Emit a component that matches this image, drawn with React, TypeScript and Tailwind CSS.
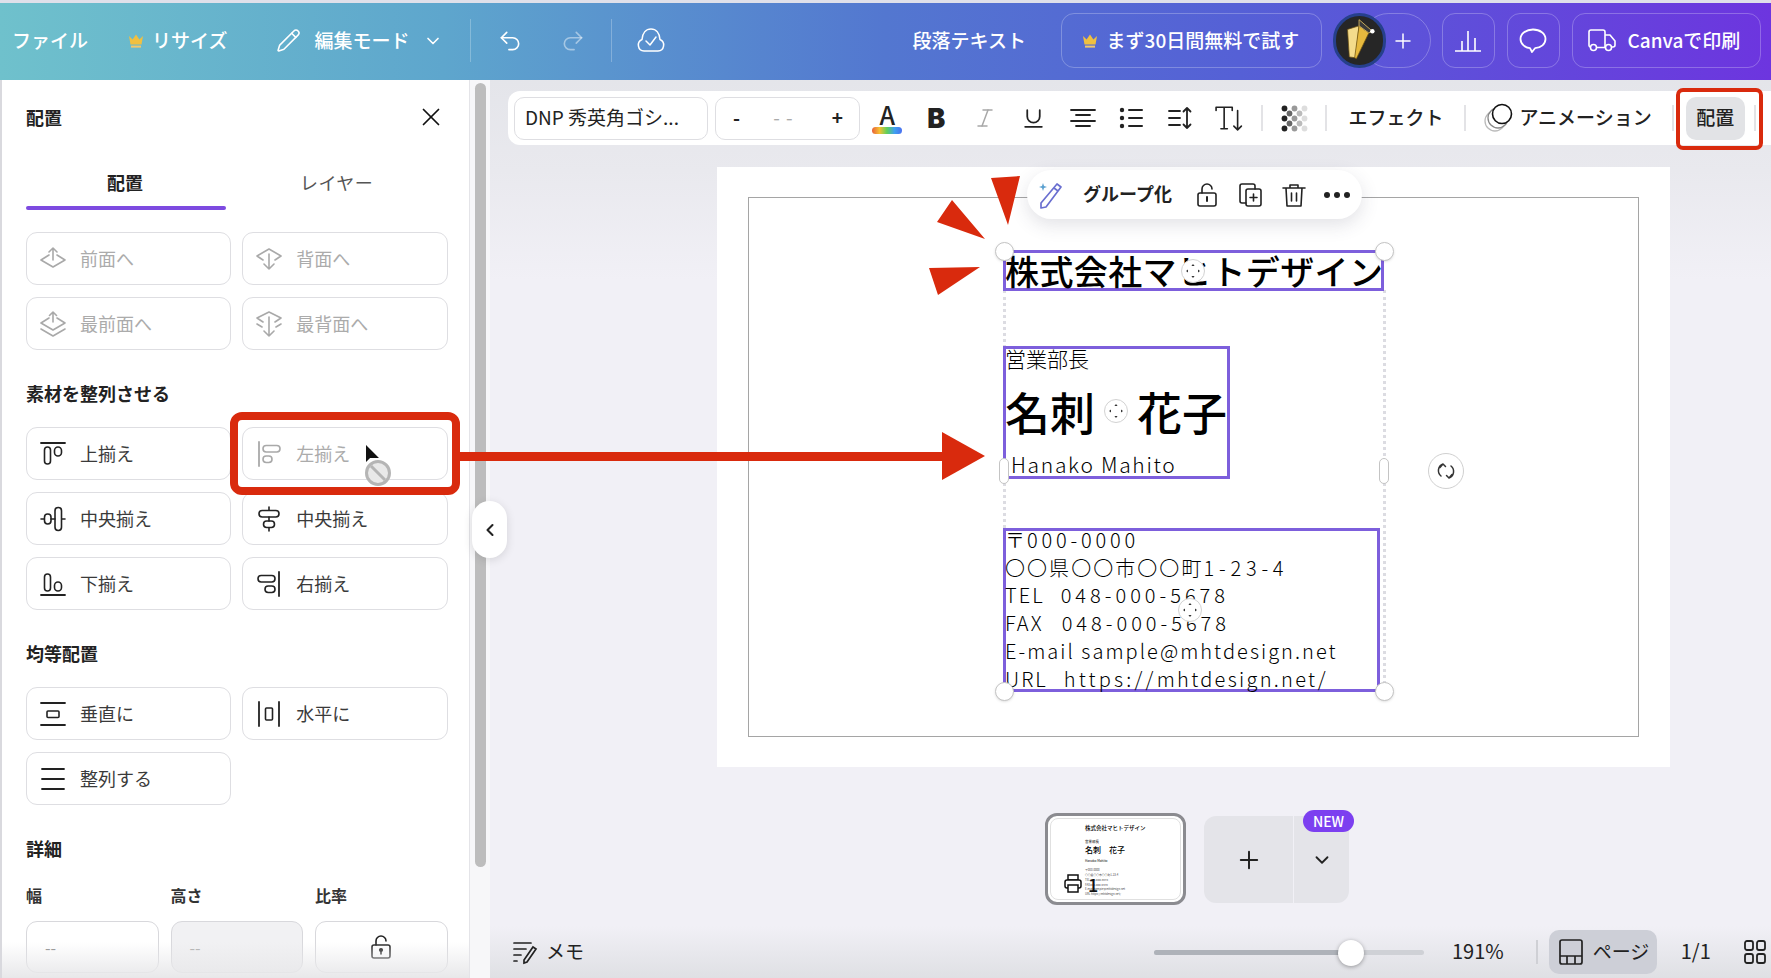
import React from "react";
import { X, ChevronDown, ChevronLeft, Plus, Undo2, Redo2, Pencil, Italic, Underline } from "lucide-react";

type IP = { children: React.ReactNode; className?: string; size?: number; sw?: number };
const I = ({ children, className = "", size = 26, sw = 1.6 }: IP) => (
  <svg viewBox="0 0 26 26" width={size} height={size} fill="none" stroke="currentColor" strokeWidth={sw} strokeLinecap="round" strokeLinejoin="round" className={"shrink-0 " + className}>
    {children}
  </svg>
);

const Crown = ({ className = "" }: { className?: string }) => (
  <svg viewBox="0 0 16 16" width={16} height={16} className={"shrink-0 " + className}>
    <path d="M1 3l3.6 3.4L8 1.5l3.4 4.9L15 3l-1.5 8.5h-11z" fill="#f0c040" />
    <rect x="3" y="12.6" width="10" height="2" fill="#f2c96a" />
  </svg>
);

const icons: Record<string, React.ReactNode> = {
  forward: <><path d="M13 2v12M9 6l4-4 4 4" /><path d="M9 9l-8 5 12 7 12-7-8-5" /></>,
  backward: <><path d="M7 14l-6-4 12-7 12 7-6 4" /><path d="M13 8v15M8 18l5 5 5-5" /></>,
  front: <><path d="M13 1v10M9.500 4.500L13 1l3.500 3.500" /><path d="M9 7l-8 5 12 7 12-7-8-5" /><path d="M1 18l12 7 12-7" /></>,
  back: <><path d="M7 11L1 7l12-6 12 6-6 4" /><path d="M1 13l5 3M25 13l-5 3" /><path d="M13 6v19M8 20l5 5 5-5" /></>,
  top: <><path d="M1 2h24" strokeWidth="1.800" /><rect x="4.500" y="6" width="6" height="17" rx="3" /><rect x="14.500" y="6" width="7" height="9" rx="3.500" /></>,
  left: <><path d="M3 1v24" strokeWidth="1.800" /><rect x="7" y="4.500" width="17" height="6.500" rx="3.200" /><rect x="7" y="15" width="9" height="6.500" rx="3.200" /></>,
  midv: <><path d="M1 13h3M11 13h4M22 13h3" /><rect x="4.500" y="8" width="6.500" height="10" rx="3.200" /><rect x="15" y="1.500" width="6.500" height="23" rx="3.200" /></>,
  midh: <><path d="M13 1v3M13 11v4M13 22v3" /><rect x="3" y="4.500" width="20" height="6.500" rx="3.200" /><rect x="7.500" y="15" width="11" height="6.500" rx="3.200" /></>,
  bottom: <><path d="M1 24h24" strokeWidth="1.800" /><rect x="4.500" y="3" width="6" height="17" rx="3" /><rect x="14.500" y="11" width="7" height="9" rx="3.500" /></>,
  right: <><path d="M23 1v24" strokeWidth="1.800" /><rect x="2" y="4.500" width="17" height="6.500" rx="3.200" /><rect x="9" y="15" width="10" height="6.500" rx="3.200" /></>,
  dv: <><path d="M1 2h24M1 24h24" strokeWidth="1.800" /><rect x="7" y="10" width="12" height="6.500" rx="1" /></>,
  dh: <><path d="M3 1v24M23 1v24" strokeWidth="1.800" /><rect x="9.500" y="7" width="7" height="12" rx="1" /></>,
  tidy: <><path d="M2 3h22M2 13h22M2 23h22" strokeWidth="1.800" /></>,
};

const Btn = ({ icon, label, off }: { icon: string; label: string; off?: boolean }) => (
  <div className={"h-[53px] border border-[#dedee2] rounded-[11px] flex items-center pl-[13px] gap-[14px] text-[18px] bg-white " + (off ? "text-[#ababab]" : "text-[#3a3a3a]")}>
    <I className={off ? "text-[#a9a9a9]" : "text-[#222]"}>{icons[icon]}</I>
    <span>{label}</span>
  </div>
);

const Heading = ({ children, className = "" }: { children: React.ReactNode; className?: string }) => (
  <div className={"h-6 mt-[33px] mb-5 leading-[21px] text-[18px] font-semibold text-[#222] " + className}>{children}</div>
);

const Panel = () => (
  <aside className="relative w-[470px] shrink-0 bg-white border-l-2 border-r border-l-[#d9d9de] border-r-[#e4e4e8] pl-6 pr-[21px]">
    <div className="h-[76px] flex items-center justify-between pb-[2px]">
      <span className="text-[18px] font-semibold text-[#222]">配置</span>
      <X size={30} strokeWidth={1.400} className="text-[#111] mr-[2px]" />
    </div>
    <div className="grid grid-cols-2 w-[421.500px] h-[54px] text-[18px]">
      <div className="relative flex items-center justify-center w-[200px] text-[#222] font-semibold pb-[2px] pr-[2px]">
        配置
        <div className="absolute left-0 right-0 bottom-0 h-1 rounded bg-[#7d4ae0]" />
      </div>
      <div className="flex items-center justify-center -ml-[11px] text-[#555] pb-[2px] tracking-[0.500px]">レイヤー</div>
    </div>
    <div className="grid grid-cols-2 gap-x-[11px] gap-y-3 w-[421.500px] mt-[22px]">
      <Btn icon="forward" label="前面へ" off />
      <Btn icon="backward" label="背面へ" off />
      <Btn icon="front" label="最前面へ" off />
      <Btn icon="back" label="最背面へ" off />
    </div>
    <Heading>素材を整列させる</Heading>
    <div className="grid grid-cols-2 gap-x-[11px] gap-y-3 w-[421.500px]">
      <Btn icon="top" label="上揃え" />
      <Btn icon="left" label="左揃え" off />
      <Btn icon="midv" label="中央揃え" />
      <Btn icon="midh" label="中央揃え" />
      <Btn icon="bottom" label="下揃え" />
      <Btn icon="right" label="右揃え" />
    </div>
    <Heading>均等配置</Heading>
    <div className="grid grid-cols-2 gap-x-[11px] gap-y-3 w-[421.500px]">
      <Btn icon="dv" label="垂直に" />
      <Btn icon="dh" label="水平に" />
      <Btn icon="tidy" label="整列する" />
    </div>
    <Heading className="mb-0">詳細</Heading>
    <div className="grid grid-cols-3 gap-x-3 w-[421.500px] mt-[22px] text-[16px] font-semibold text-[#333] leading-[22px]">
      <span>幅</span><span>高さ</span><span>比率</span>
    </div>
    <div className="grid grid-cols-3 gap-x-3 w-[421.500px] mt-[15px]">
      <div className="h-[52px] border border-[#d8d8dc] rounded-[11px] flex items-center pl-[18px] text-[#888] text-[16px]">--</div>
      <div className="h-[52px] border border-[#d8d8dc] rounded-[11px] flex items-center pl-[18px] text-[#aaa] text-[16px] bg-[#f1f1f3]">--</div>
      <div className="h-[52px] border border-[#d8d8dc] rounded-[11px] flex items-center justify-center text-[#222]">
        <I><path d="M8 11V7a5 5 0 0 1 10 0" /><rect x="4" y="11" width="18" height="13" rx="2" /><circle cx="13" cy="16" r="1.300" fill="currentColor" /><path d="M13 17v3" /></I>
      </div>
    </div>
    <div className="absolute left-0 right-0 bottom-0 h-[36px] bg-gradient-to-b from-[#ffffff00] to-[#e8e8ea] pointer-events-none" />
  </aside>
);

const Gutter = () => (
  <div className="w-[20px] shrink-0 bg-[#f7f7f9] pl-[5px] pt-[3px]">
    <div className="w-[11px] h-[784px] rounded-full bg-[#bdbdbd]" />
  </div>
);

const Sep = ({ className = "" }: { className?: string }) => <div className={"w-[2px] h-[26px] bg-[#e3e3e6] shrink-0 " + className} />;

const Cell = ({ children }: { children: React.ReactNode }) => <div className="w-[48.800px] shrink-0 flex items-center justify-center text-[#222]">{children}</div>;

const dots: { c: number; r: number; f: string }[] = [
  [0, 0, "#222"], [0, 2, "#222"], [0, 4, "#222"],
  [1, 1, "#666"], [1, 3, "#666"],
  [2, 0, "#999"], [2, 2, "#999"], [2, 4, "#999"],
  [3, 1, "#bbb"], [3, 3, "#bbb"],
  [4, 0, "#ddd"], [4, 2, "#ddd"], [4, 4, "#ddd"],
].map(([c, r, f]) => ({ c: c as number, r: r as number, f: f as string }));

const Toolbar = () => (
  <div className="ml-[18px] mt-[11px] h-[54px] bg-white rounded-l-[12px] flex items-center pl-[6px] text-[#222] shrink-0">
    <div className="w-[194px] h-[43px] border border-[#dedee2] rounded-[10px] flex items-center pl-[10px] pb-[2px] text-[19px] shrink-0 whitespace-nowrap">DNP 秀英角ゴシ...</div>
    <div className="w-[145px] h-[43px] ml-[7px] border border-[#dedee2] rounded-[10px] flex items-center justify-between pl-[17px] pr-[16px] pb-[2px] text-[19px] shrink-0">
      <span className="font-semibold">-</span>
      <span className="text-[#aaa] tracking-[6px]">--</span>
      <span className="font-semibold">+</span>
    </div>
    <div className="ml-[3px] flex">
      <Cell>
        <div className="flex flex-col items-center">
          <span className="text-[25px] leading-[24px] font-medium">A</span>
          <div className="w-[30px] h-[7px] rounded-full mt-[1px] bg-[linear-gradient(90deg,#e8603a,#f5c033,#5fd05a,#3fa0f0,#4a70f0)]" />
        </div>
      </Cell>
      <Cell><span className="font-['Inter',sans-serif] font-black text-[27px] leading-none">B</span></Cell>
      <Cell><Italic size={24} strokeWidth={1.500} className="text-[#a8a8a8]" /></Cell>
      <Cell><Underline size={25} strokeWidth={1.700} /></Cell>
      <Cell><I sw={1.800}><path d="M1 5h24M6 10h14M1 16h24M6 21h14" /></I></Cell>
      <Cell><I sw={2}><circle cx="4" cy="5" r="2.200" fill="currentColor" stroke="none" /><circle cx="4" cy="13" r="2.200" fill="currentColor" stroke="none" /><circle cx="4" cy="21" r="2.200" fill="currentColor" stroke="none" /><path d="M11 5h13M11 13h13M11 21h13" /></I></Cell>
      <Cell><I sw={1.800}><path d="M2 6h11M2 13h11M2 20h11" /><path d="M20 3v20M16.500 6.500L20 3l3.500 3.500M16.500 19.500L20 23l3.500-3.500" /></I></Cell>
      <Cell><I size={28} sw={1.500}><path d="M1 6V3h15v3M8.500 3v20M5.500 23h6" /><path d="M21 6v18M17.500 20.500l3.500 3.500 3.500-3.500" /></I></Cell>
    </div>
    <Sep className="ml-[8px]" />
    <div className="w-[62px] flex justify-center shrink-0">
      <svg width="27" height="27" viewBox="0 0 27 27" className="shrink-0">
        {dots.map((d, i) => <circle key={i} cx={3.500 + d.c * 5} cy={3.500 + d.r * 5} r="2.900" fill={d.f} />)}
      </svg>
    </div>
    <Sep />
    <span className="ml-[21px] pb-[2px] text-[19px] font-medium whitespace-nowrap">エフェクト</span>
    <Sep className="ml-[21px]" />
    <svg width="30" height="30" viewBox="0 0 30 30" fill="none" strokeWidth="1.300" className="ml-[18px] shrink-0">
      <circle cx="11" cy="18" r="10" stroke="#bbb" />
      <circle cx="14" cy="15" r="10" stroke="#888" fill="#fff" />
      <circle cx="18" cy="11" r="9.500" stroke="#111" strokeWidth="1.600" fill="#fff" />
    </svg>
    <span className="ml-[5px] pb-[2px] text-[19px] font-medium whitespace-nowrap">アニメーション</span>
    <Sep className="ml-[20px]" />
    <div className="ml-[12px] w-[59px] h-[43px] rounded-[10px] bg-[#e2e3e6] flex items-center justify-center pb-[2px] text-[19px] font-medium shrink-0">配置</div>
    <Sep className="ml-[9px]" />
  </div>
);

const Handle = ({ className }: { className: string }) => (
  <div className={"absolute w-[19px] h-[19px] rounded-full bg-white border border-[#c4c4c4] shadow-sm " + className} />
);
const Move = ({ className }: { className: string }) => (
  <div className={"absolute w-[24px] h-[24px] rounded-full bg-white border border-[#d2d2d2] flex items-center justify-center " + className}>
    <svg width="14" height="14" viewBox="0 0 14 14" fill="#333"><path d="M7 0l1.600 2H5.400zM7 14l1.600-2H5.400zM0 7l2-1.600v3.200zM14 7l-2-1.600v3.200z" /></svg>
  </div>
);

const Design = () => (
  <div className="relative ml-[227px] mt-[22px] w-[953px] h-[600px] shrink-0 bg-white p-[30px_31px]">
    <div className="relative h-full border-[1.500px] border-[#a5a5a5] pl-[254px] pt-[52px] text-black">
      <div className="absolute left-[254px] top-[92px] h-[400px] w-[383px] border-x-[3px] border-dotted border-[#dcdce2]" />
      <div className="relative w-[381px] h-[41px] border-[3px] border-[#7d5fdc] flex items-center whitespace-nowrap text-[34px] font-medium leading-none tracking-[0.400px]">
        <span className="-ml-[1px]">株式会社マヒトデザイン</span>
        <Move className="left-[175px] top-[6px]" />
      </div>
      <div className="relative w-[227px] h-[133px] mt-[55px] border-[3px] border-[#7d5fdc] whitespace-nowrap">
        <div className="-ml-[1px] text-[21px] leading-[22px] font-light -mt-[2px]">営業部長</div>
        <div className="text-[45px] leading-[56px] font-medium mt-[15px] flex justify-between -ml-[1px] pr-0"><span>名刺</span><span>花子</span></div>
        <div className="pl-[5px] text-[21px] leading-[24px] font-light tracking-[1.700px] mt-[12px]">Hanako Mahito</div>
        <Move className="left-[98px] top-[50px]" />
      </div>
      <div className="relative w-[377px] h-[164px] mt-[49px] border-[3px] border-[#7d5fdc] whitespace-pre text-[20px] leading-[27.700px] font-light tracking-[2.050px]">
        <div className="-mt-[5px] -ml-[1px]">〒<span className="tracking-[3.800px]">000-0000</span></div>
        <div className="-ml-[1px]">〇〇県〇〇市〇〇町<span className="tracking-[4.800px]">1-23-4</span></div>
        <div className="-ml-[1px]">TEL  <span className="ml-[3px] tracking-[4px]">048-000-5678</span></div>
        <div className="-ml-[1px]">FAX  <span className="ml-[5px] tracking-[4px]">048-000-5678</span></div>
        <div className="-ml-[1px]">E-mail sample@mhtdesign.net</div>
        <div className="-ml-[1px]">URL  <span className="ml-[3px] tracking-[3.200px]">https://</span><span className="tracking-[2.300px]">mhtdesign.net/</span></div>
        <Move className="left-[172px] top-[67px]" />
      </div>
      <Handle className="left-[246px] top-[44px]" />
      <Handle className="left-[626px] top-[44px]" />
      <Handle className="left-[246px] top-[484px]" />
      <Handle className="left-[626px] top-[484px]" />
      <div className="absolute left-[250px] top-[260px] w-[10px] h-[26px] rounded-full bg-white border border-[#c4c4c4]" />
      <div className="absolute left-[630px] top-[260px] w-[10px] h-[26px] rounded-full bg-white border border-[#c4c4c4]" />
      <div className="absolute left-[679px] top-[255px] w-[36px] h-[36px] rounded-full bg-white border border-[#d0d0d0] flex items-center justify-center">
        <svg width="20" height="20" viewBox="0 0 20 20" fill="none" stroke="#333" strokeWidth="1.500" strokeLinecap="round" strokeLinejoin="round"><path d="M5 15a7 7 0 0 1 2-12M4 6.500L7 3l2.500 2.500M15 5a7 7 0 0 1-2 12M16 13.500L13 17l-2.500-2.500" /></svg>
      </div>
    </div>
    <div className="absolute left-[310px] top-[3px] w-[335px] h-[49px] rounded-full bg-white shadow-[0_6px_18px_rgba(60,60,90,0.15)] flex items-center pl-[10px] text-[#222]">
      <svg width="27" height="30" viewBox="0 0 27 30" fill="none" stroke="#6a6fd0" strokeWidth="1.700" strokeLinejoin="round" className="shrink-0">
        <path d="M20 4l4 3L9 27l-5 1 0-5z" /><path d="M17 8l4 3" />
        <path d="M6 3l1 3 3 1-3 1-1 3-1-3-3-1 3-1z" fill="#5aa0d0" stroke="none" />
      </svg>
      <span className="ml-[19px] pb-[2px] text-[18px] font-semibold whitespace-nowrap">グループ化</span>
      <I className="ml-[22px]"><path d="M8 11V7a5 5 0 0 1 10 0" /><rect x="4" y="11" width="18" height="13" rx="2" /><path d="M13 15v4" strokeWidth="2" /></I>
      <I className="ml-[17px]"><rect x="9" y="7" width="15" height="17" rx="2" /><path d="M9 21H5a2 2 0 0 1-2-2V4a2 2 0 0 1 2-2h11a2 2 0 0 1 2 2v3" /><path d="M16.500 12v7M13 15.500h7" /></I>
      <I className="ml-[18px]"><path d="M2 6h22M9 6V3h8v3M5 6l1 18h14l1-18M10.500 11v8M15.500 11v8" /></I>
      <div className="ml-[17px] flex gap-[4px]">
        <span className="w-[6px] h-[6px] rounded-full bg-[#222]" />
        <span className="w-[6px] h-[6px] rounded-full bg-[#222]" />
        <span className="w-[6px] h-[6px] rounded-full bg-[#222]" />
      </div>
    </div>
  </div>
);

const Thumbs = () => (
  <div className="ml-[555px] mt-[46px] flex items-start shrink-0">
    <div className="relative w-[141px] h-[92px] rounded-[12px] border-[3px] border-[#8b8b90] bg-white p-[2px] overflow-hidden">
      <div className="w-full h-full border border-[#e0e0e0] rounded-[8px] pl-[34px] pt-[7px] text-black leading-none whitespace-nowrap">
        <div className="text-[5.500px] font-medium">株式会社マヒトデザイン</div>
        <div className="text-[3.500px] mt-[8px]">営業部長</div>
        <div className="text-[8px] font-medium mt-[3px]">名刺　花子</div>
        <div className="text-[3.200px] mt-[5px]">Hanako Mahito</div>
        <div className="text-[2.800px] leading-[4.800px] mt-[6px] text-[#444]">〒000-0000<br />〇〇県〇〇市〇〇町1-23-4<br />TEL 048-000-5678<br />FAX 048-000-5678<br />E-mail sample@mhtdesign.net<br />URL https://mhtdesign.net/</div>
      </div>
      <div className="absolute left-[16px] bottom-[8px] flex items-center gap-[6px] text-[#111]">
        <svg width="18" height="20" viewBox="0 0 18 20" fill="none" stroke="currentColor" strokeWidth="1.500"><rect x="4" y="1" width="10" height="5" /><rect x="1" y="6" width="16" height="8" rx="2" fill="#fff" /><rect x="4" y="11" width="10" height="7" fill="#fff" /></svg>
        <span className="text-[18px] font-medium leading-none">1</span>
      </div>
    </div>
    <div className="relative ml-[18px] mt-[3px] w-[145px] h-[87px] flex">
      <div className="w-[89px] h-full bg-[#e4e4e9] rounded-l-[12px] flex items-center justify-center"><Plus size={28} strokeWidth={1.700} className="text-[#222]" /></div>
      <div className="w-[55px] ml-[1px] h-full bg-[#e4e4e9] rounded-r-[12px] flex items-center justify-center"><ChevronDown size={22} strokeWidth={2} className="text-[#222]" /></div>
      <div className="absolute left-[99px] top-[-6px] w-[51px] h-[22px] rounded-full bg-[#7c3ff0] text-white text-[14px] font-medium flex items-center justify-center">NEW</div>
    </div>
  </div>
);

const BottomBar = () => (
  <div className="mt-auto h-[52px] shrink-0 bg-gradient-to-b from-[#f1f0f6] to-[#dfe0e4] flex items-center text-[#222] text-[19px]">
    <svg width="26" height="26" viewBox="0 0 26 26" fill="none" stroke="currentColor" strokeWidth="1.700" strokeLinecap="round" className="ml-[22px] shrink-0">
      <path d="M2 4h17M2 10h12M2 16h7M2 22h3" /><path d="M21 8l3 2-9 13-3 1 0-3z" />
    </svg>
    <span className="ml-[8px] pb-[2px]">メモ</span>
    <div className="ml-[570px] w-[270px] h-[5px] rounded-full bg-[#cfd1d6] relative shrink-0">
      <div className="absolute left-0 top-0 h-full w-[198px] rounded-full bg-[#aeb2b9]" />
      <div className="absolute left-[184px] top-[-10px] w-[26px] h-[26px] rounded-full bg-white shadow-[0_1px_4px_rgba(0,0,0,0.35)]" />
    </div>
    <span className="ml-[28px] pb-[2px] text-[20px]">191%</span>
    <div className="ml-[32px] w-[2px] h-[24px] bg-[#cfd0d5]" />
    <div className="ml-[11px] w-[108px] h-[44px] rounded-[10px] bg-[#cdcfd7] flex items-center pl-[10px] gap-[10px] shrink-0">
      <svg width="24" height="26" viewBox="0 0 24 26" fill="none" stroke="currentColor" strokeWidth="1.700" className="shrink-0"><rect x="1" y="1" width="22" height="24" rx="2" /><path d="M1 17h22M8 17v8M16 17v8" /></svg>
      <span className="whitespace-nowrap pb-[2px]">ページ</span>
    </div>
    <span className="ml-[24px] pb-[2px] text-[20px]">1/1</span>
    <svg width="22" height="24" viewBox="0 0 22 24" fill="none" stroke="currentColor" strokeWidth="1.800" className="ml-[33px] shrink-0"><rect x="1" y="1" width="8" height="9" rx="2" /><rect x="13" y="1" width="8" height="9" rx="2" /><rect x="1" y="14" width="8" height="9" rx="2" /><rect x="13" y="14" width="8" height="9" rx="2" /></svg>
  </div>
);

const TopBtn = ({ children, className = "" }: { children: React.ReactNode; className?: string }) => (
  <div className={"h-[55px] border border-white/25 rounded-[13px] flex items-center justify-center shrink-0 " + className}>{children}</div>
);
const HSep = ({ className = "" }: { className: string }) => <div className={"w-px h-[43px] bg-white/25 shrink-0 " + className} />;

const Header = () => (
  <header className="h-[77px] shrink-0 pb-[2px] bg-[linear-gradient(90deg,#6fc1cc_0%,#5ea6cd_25%,#5377d0_50%,#5560d6_70%,#6d35df_100%)] flex items-center text-white text-[19px] font-medium">
    <span className="ml-[12px]">ファイル</span>
    <Crown className="ml-[40px]" />
    <span className="ml-[8px]">リサイズ</span>
    <Pencil size={25} strokeWidth={1.500} className="ml-[49px] shrink-0" />
    <span className="ml-[13px] whitespace-nowrap">編集モード</span>
    <ChevronDown size={20} strokeWidth={2} className="ml-[14px] shrink-0" />
    <HSep className="ml-[27px]" />
    <Undo2 size={26} strokeWidth={1.500} className="ml-[26px] shrink-0" />
    <Redo2 size={26} strokeWidth={1.500} className="ml-[37px] text-white/45 shrink-0" />
    <HSep className="ml-[25px]" />
    <svg width="30" height="28" viewBox="0 0 30 28" fill="none" stroke="currentColor" strokeWidth="1.500" strokeLinecap="round" strokeLinejoin="round" className="ml-[24px] shrink-0">
      <path d="M8 24a6 6 0 0 1-2-11.500C6.500 6 10 2 15 2s8.500 4 9 10.500A6 6 0 0 1 22 24z" /><path d="M10 14l4 4 6-8" />
    </svg>
    <span className="ml-[246px] whitespace-nowrap">段落テキスト</span>
    <TopBtn className="ml-[35px] w-[261px] gap-[9px] pr-[2px]"><Crown /><span className="whitespace-nowrap">まず30日間無料で試す</span></TopBtn>
    <div className="relative ml-[11px] w-[98px] h-[55px] shrink-0">
      <div className="absolute right-0 top-0 w-[70px] h-[55px] rounded-full border border-white/25 flex items-center justify-end pr-[15px]"><Plus size={24} strokeWidth={1.500} /></div>
      <div className="absolute left-0 top-0 w-[53px] h-[55px] rounded-full bg-[#262626] border-[3px] border-[#26408c] overflow-hidden">
        <svg viewBox="0 0 53 55" width="47" height="49">
          <path d="M26 11L13 15l2 31 7 1z" fill="#f4dc8c" stroke="#6a5010" strokeWidth="0.800" />
          <path d="M26 11l11 8-14 29-2-1z" fill="#e6b93e" stroke="#6a5010" strokeWidth="0.800" />
          <path d="M26 4l15 13-4 2-11-8z" fill="#3a3a3a" stroke="#d8b860" strokeWidth="1" />
          <circle cx="41" cy="17" r="2.500" fill="#fff" />
        </svg>
      </div>
    </div>
    <TopBtn className="ml-[11px] w-[53px]">
      <svg width="28" height="22" viewBox="0 0 28 22" fill="none" stroke="currentColor" strokeWidth="1.600"><path d="M1 21h26M8 21V11M14 21V1M21 21V8" /></svg>
    </TopBtn>
    <TopBtn className="ml-[12px] w-[53px]">
      <svg width="28" height="26" viewBox="0 0 28 26" fill="none" stroke="currentColor" strokeWidth="1.800" strokeLinejoin="round"><path d="M14 1.500C7 1.500 1.500 5.500 1.500 11c0 5 5 9 9.500 9.200l2 3.800 3-3.800C22 20 26.500 16 26.500 11 26.500 5.500 21 1.500 14 1.500z" /></svg>
    </TopBtn>
    <TopBtn className="ml-[12px] w-[189px] gap-[10px] pr-[4px]">
      <svg width="29" height="23" viewBox="0 0 29 23" fill="none" stroke="currentColor" strokeWidth="1.600" strokeLinejoin="round" className="shrink-0"><path d="M2 18a2 2 0 0 1-1-2V3a2 2 0 0 1 2-2h12a2 2 0 0 1 2 2v15M9 18.500h8M17 6h5l5 6v4a2 2 0 0 1-2 2h-1" /><circle cx="5.500" cy="18.500" r="3" /><circle cx="20.500" cy="18.500" r="3" /></svg>
      <span className="whitespace-nowrap">Canvaで印刷</span>
    </TopBtn>
  </header>
);

const Overlays = () => (
  <>
    <div className="absolute left-[230px] top-[412px] w-[230px] h-[83px] border-[8px] border-[#d92a0d] rounded-[12px]" />
    <svg width="535" height="50" viewBox="0 0 535 50" className="absolute left-[455px] top-[432px]">
      <rect x="0" y="20" width="490" height="9" fill="#d92a0d" />
      <path d="M487 0l43 24-43 24z" fill="#d92a0d" />
    </svg>
    <svg width="100" height="130" viewBox="0 0 100 130" className="absolute left-[920px] top-[170px]">
      <path d="M71 8l29-2-12 49zM32 30L17 52l48 17zM9 98l51-1-42 28z" fill="#d92a0d" />
    </svg>
    <svg width="32" height="44" viewBox="0 0 32 44" className="absolute left-[362px] top-[443px]">
      <path d="M4 2v17l4-4 4 0z" fill="#111" stroke="#fff" strokeWidth="0.800" />
      <path d="M4 2l13 13h-9l-4 4z" fill="#111" />
      <circle cx="16" cy="30" r="11.500" fill="#e9e9e9" stroke="#b5b5b5" strokeWidth="3" />
      <path d="M9 23l14 14" stroke="#b5b5b5" strokeWidth="3" />
    </svg>
    <div className="absolute left-[1676px] top-[88px] w-[87px] h-[62px] border-4 border-[#d92a0d] rounded-[7px]" />
    <div className="absolute left-[472px] top-[501px] w-[35px] h-[57px] rounded-[18px] bg-white shadow-[0_2px_10px_rgba(0,0,0,0.12)] flex items-center justify-center">
      <ChevronLeft size={20} strokeWidth={2.500} className="text-[#222]" />
    </div>
  </>
);

export default function App() {
  return (
    <div className="relative w-screen h-screen overflow-hidden flex flex-col bg-[#f1f0f6] font-['Noto_Sans_CJK_JP','Noto_Sans',sans-serif]">
      <div className="h-[3px] shrink-0 bg-[#dfe0ea]" />
      <Header />
      <div className="flex flex-1 min-h-0">
        <Panel />
        <Gutter />
        <main className="flex-1 min-w-0 flex flex-col bg-[linear-gradient(180deg,#e4e5ea_0px,#e9e9ee_90px,#f1f0f6_200px)]">
          <Toolbar />
          <Design />
          <Thumbs />
          <BottomBar />
        </main>
      </div>
      <Overlays />
    </div>
  );
}
